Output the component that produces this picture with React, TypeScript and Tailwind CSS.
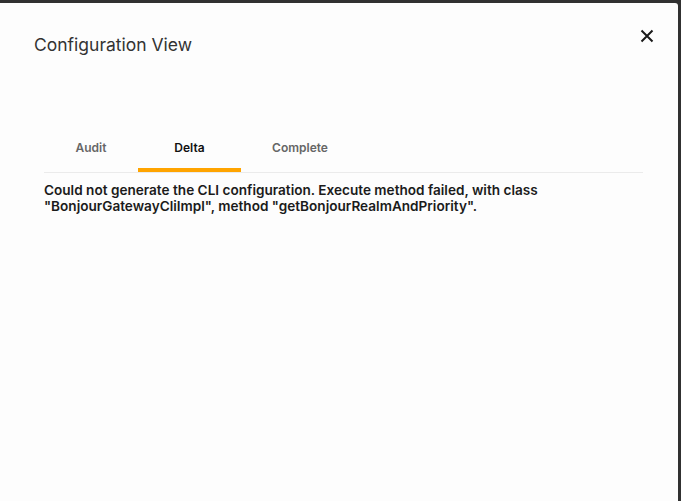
const tabs = [
  { label: "Audit", width: "w-[94px]", active: false },
  { label: "Delta", width: "w-[103px]", active: true },
  { label: "Complete", width: "w-[118px]", active: false },
]

function CloseIcon() {
  return (
    <svg width="14" height="14" viewBox="0 0 14 14" fill="none">
      <path d="M1.5 1.5L12.5 12.5M12.5 1.5L1.5 12.5" stroke="#1a1a1a" strokeWidth="2" />
    </svg>
  )
}

export default function App() {
  return (
    <div className="h-[501px] w-[681px] overflow-hidden bg-[#313131] pr-[3px] pt-[3px] font-['Inter',sans-serif]">
      <div className="h-full rounded-tr-[3px] bg-[#fdfdfd]">
        <div className="flex items-start justify-between pl-[34px] pr-[24px] pt-[30px]">
          <h1 className="text-[17.5px] font-normal leading-[24px] text-[#333]">Configuration View</h1>
          <button className="mt-[-4px] p-0">
            <CloseIcon />
          </button>
        </div>

        <div className="ml-[44px] mr-[35px] mt-[76px]">
          <div className="flex border-b border-[#ebebeb]">
            {tabs.map((tab) => (
              <div
                key={tab.label}
                className={`${tab.width} flex h-[39px] flex-col items-center justify-between`}
              >
                <span
                  className={`pt-[8px] text-[12px] font-semibold leading-[14px] ${
                    tab.active ? "text-[#111]" : "text-[#666]"
                  }`}
                >
                  {tab.label}
                </span>
                <span className={`h-[4px] w-full ${tab.active ? "bg-[#ffa400]" : ""}`} />
              </div>
            ))}
          </div>

          <p className="mt-[9px] text-[13.6px] font-semibold leading-[16px] text-[#1b1b1b]">
            Could not generate the CLI configuration. Execute method failed, with class
            <br />
            "BonjourGatewayCliImpl", method "getBonjourRealmAndPriority".
          </p>
        </div>
      </div>
    </div>
  )
}
